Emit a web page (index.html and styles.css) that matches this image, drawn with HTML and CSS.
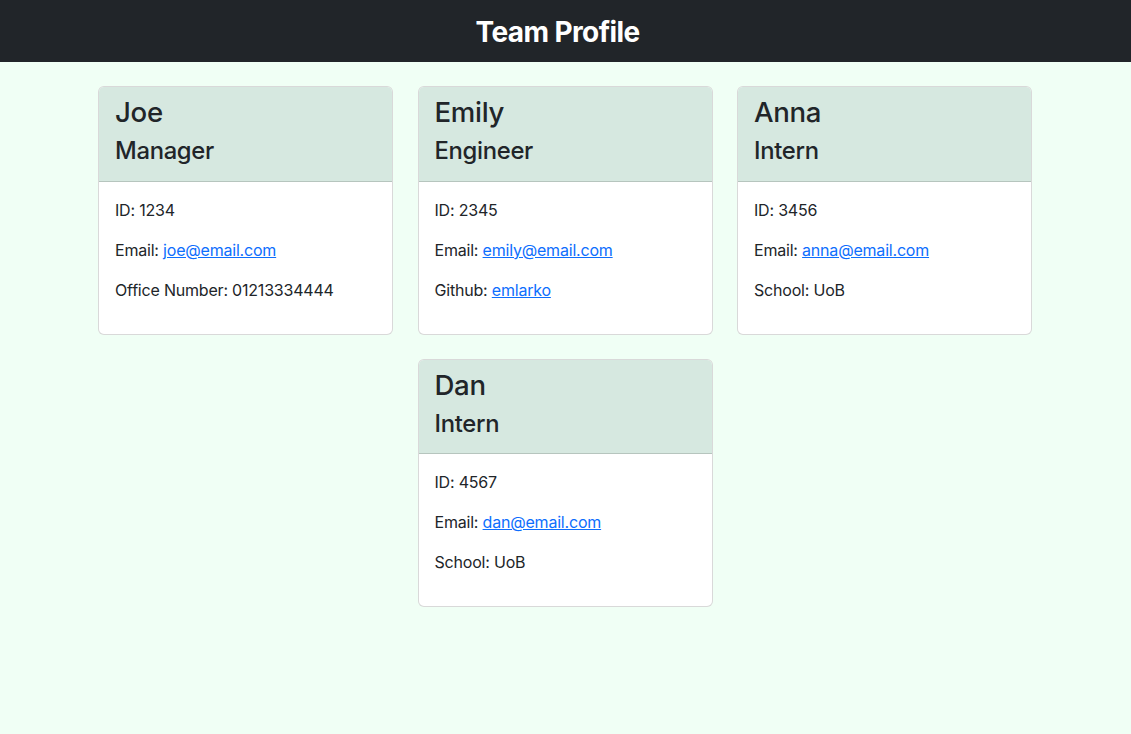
FILE: index.html
```html
<!DOCTYPE html>
<html lang="en">
<head>
<meta charset="utf-8">
<title>Team Profile</title>
<link rel="stylesheet" href="styles.css">
</head>
<body>
<header class="topbar">
  <h1 class="topbar-title">Team Profile</h1>
</header>
<main class="team">
  <div class="card">
    <div class="card-header">
      <h3 class="name">Joe</h3>
      <h4 class="role">Manager</h4>
    </div>
    <div class="card-body">
      <p>ID: 1234</p>
      <p>Email: <a href="#">joe@email.com</a></p>
      <p>Office Number: 01213334444</p>
    </div>
  </div>
  <div class="card">
    <div class="card-header">
      <h3 class="name">Emily</h3>
      <h4 class="role">Engineer</h4>
    </div>
    <div class="card-body">
      <p>ID: 2345</p>
      <p>Email: <a href="#">emily@email.com</a></p>
      <p>Github: <a href="#">emlarko</a></p>
    </div>
  </div>
  <div class="card">
    <div class="card-header">
      <h3 class="name">Anna</h3>
      <h4 class="role">Intern</h4>
    </div>
    <div class="card-body">
      <p>ID: 3456</p>
      <p>Email: <a href="#">anna@email.com</a></p>
      <p>School: UoB</p>
    </div>
  </div>
  <div class="card">
    <div class="card-header">
      <h3 class="name">Dan</h3>
      <h4 class="role">Intern</h4>
    </div>
    <div class="card-body">
      <p>ID: 4567</p>
      <p>Email: <a href="#">dan@email.com</a></p>
      <p>School: UoB</p>
    </div>
  </div>
</main>
</body>
</html>
```

FILE: styles.css
```css
* { box-sizing: border-box; }
html, body {
  margin: 0;
  padding: 0;
}
body {
  background: #f0fff5;
  color: #212529;
  font-family: Inter, "Noto Sans", "Liberation Sans", sans-serif;
  font-size: 16px;
  line-height: 1.5;
  min-height: 734px;
}
.topbar {
  background: #212529;
  height: 62px;
  padding-top: 3px;
  display: flex;
  align-items: center;
  justify-content: center;
}
.topbar-title {
  margin: 0;
  padding-right: 16px;
  color: #fff;
  font-size: 28px;
  font-weight: 700;
  line-height: 1.2;
  letter-spacing: -0.6px;
}
.team {
  width: 935px;
  padding-right: 1px;
  margin: 24px auto 0;
  display: flex;
  flex-wrap: wrap;
  justify-content: center;
  column-gap: 24.5px;
}
.card {
  width: 295px;
  margin-bottom: 24px;
  background: #fff;
  border: 1px solid rgba(0, 0, 0, 0.15);
  border-radius: 6px;
  overflow: hidden;
}
.card-header {
  background: #d6e8e0;
  padding: 8px 16px;
  border-bottom: 1px solid rgba(0, 0, 0, 0.15);
}
.name {
  margin: 0 0 8px;
  padding-top: 1px;
  font-size: 27.6px;
  font-weight: 500;
  line-height: 1.2;
  letter-spacing: -0.3px;
}
.role {
  margin: 0 0 7px;
  font-size: 23.8px;
  font-weight: 500;
  line-height: 1.2;
  letter-spacing: -0.3px;
}
.card-body {
  padding: 16px;
}
.card-body p {
  margin: 0 0 16px;
  letter-spacing: -0.2px;
}
.card-body a {
  color: #0d6efd;
  text-decoration: underline;
}
```
